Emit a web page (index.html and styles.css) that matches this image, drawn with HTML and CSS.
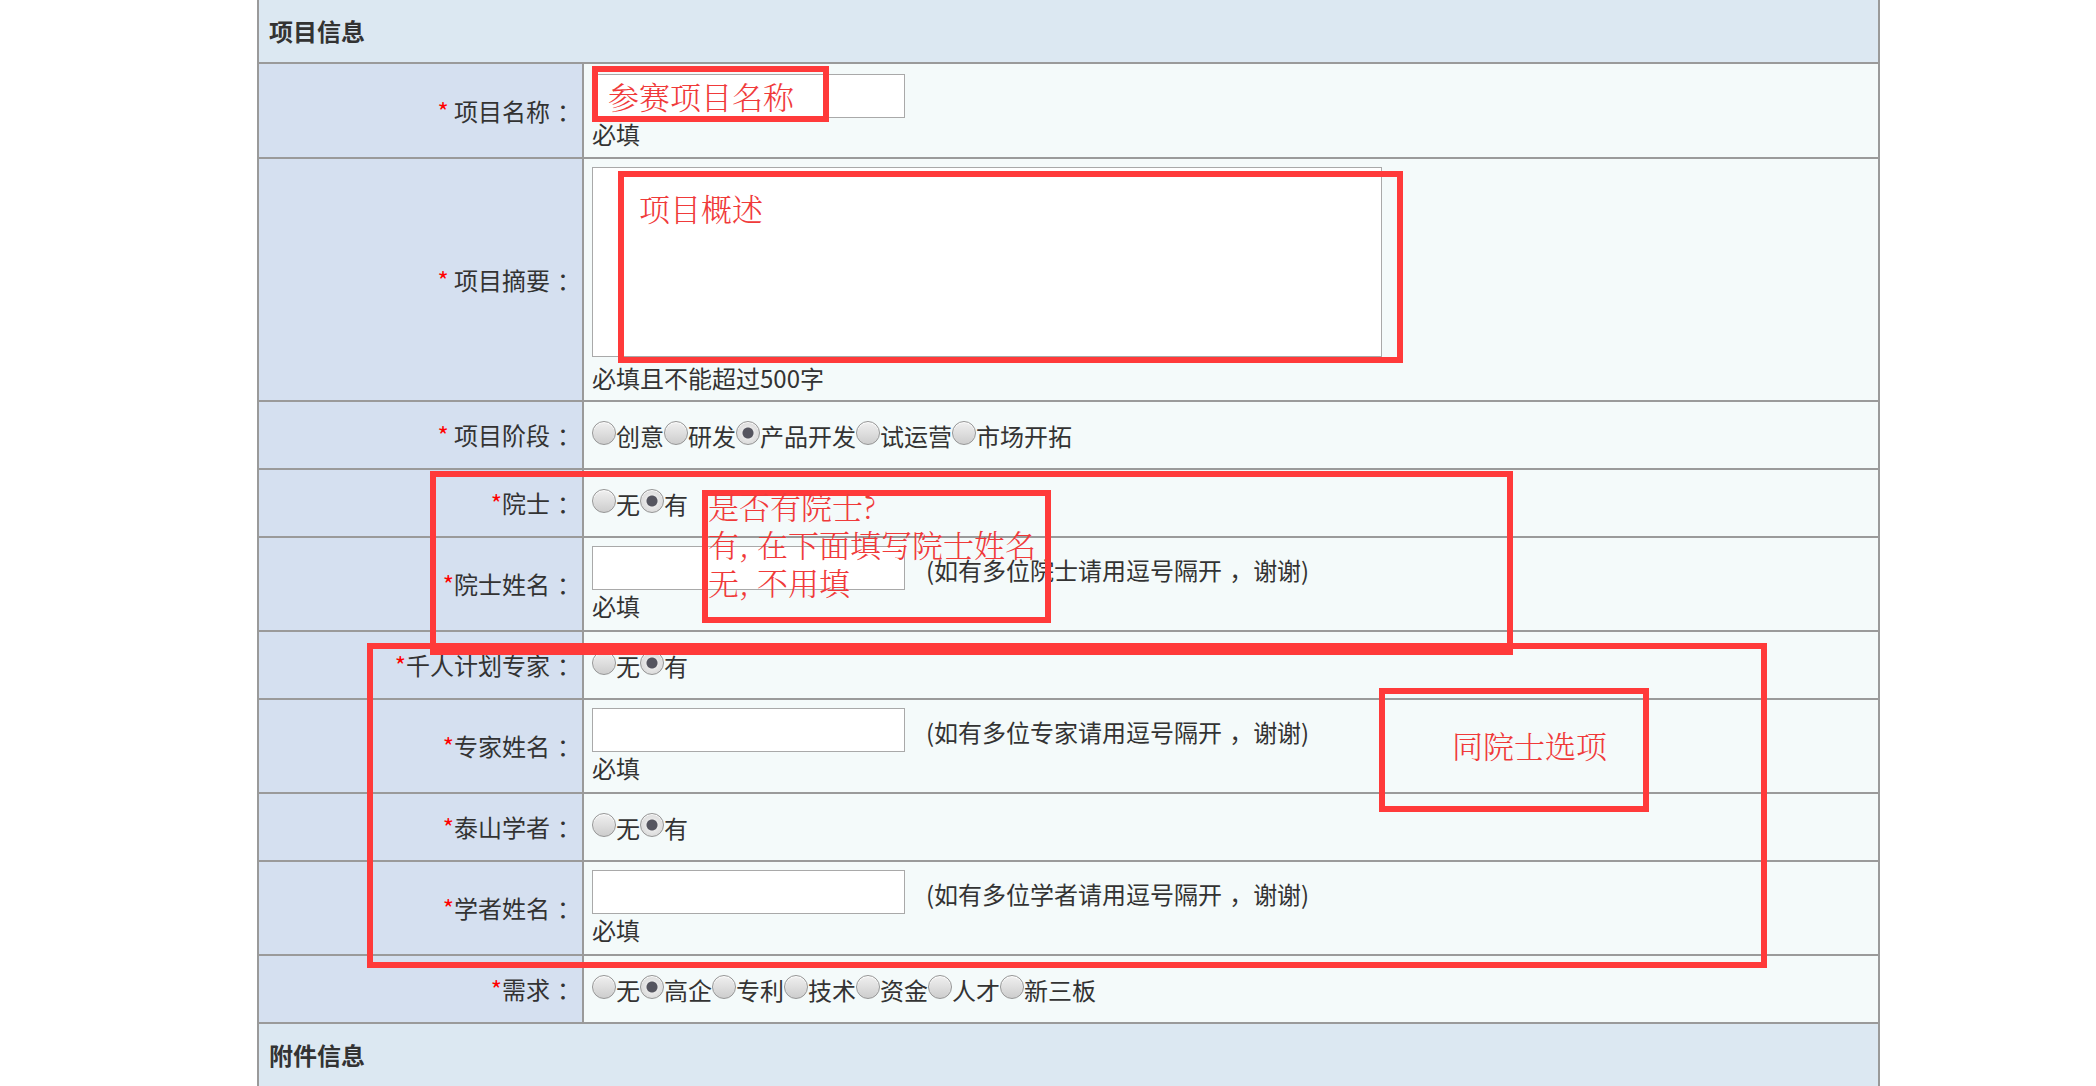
FILE: index.html
```html
<!doctype html>
<html lang="zh-CN">

    <head>
        <meta charset="utf-8">
        <title>项目信息</title>
        <link rel="stylesheet" href="styles.css">
    </head>

    <body>

        <div class="page">

            <table class="tblForm">
                <tr class="trHead">
                    <th colspan="2">项目信息</th>
                </tr>
                <tr class="trName">
                    <td class="tdLabel"><span class="req">*</span> 项目名称<span class="punc">：</span></td>
                    <td class="tdField tdTop">
                        <input type="text" class="txtInput">
                        <div class="note">必填</div>
                    </td>
                </tr>
                <tr class="trSummary">
                    <td class="tdLabel"><span class="req">*</span> 项目摘要<span class="punc">：</span></td>
                    <td class="tdField tdTop">
                        <textarea class="txtArea"></textarea>
                        <div class="note noteArea">必填且不能超过500字</div>
                    </td>
                </tr>
                <tr class="trRadio">
                    <td class="tdLabel"><span class="req">*</span> 项目阶段<span class="punc">：</span></td>
                    <td class="tdField">
                        <div class="opts">
                            <label class="opt"><input type="radio" name="stage" class="rdo">创意</label>
                            <label class="opt"><input type="radio" name="stage" class="rdo">研发</label>
                            <label class="opt"><input type="radio" name="stage" class="rdo" checked>产品开发</label>
                            <label class="opt"><input type="radio" name="stage" class="rdo">试运营</label>
                            <label class="opt"><input type="radio" name="stage" class="rdo">市场开拓</label>
                        </div>
                    </td>
                </tr>
                <tr class="trRadio">
                    <td class="tdLabel"><span class="req">*</span>院士<span class="punc">：</span></td>
                    <td class="tdField">
                        <div class="opts">
                            <label class="opt"><input type="radio" name="acad" class="rdo">无</label>
                            <label class="opt"><input type="radio" name="acad" class="rdo" checked>有</label>
                        </div>
                    </td>
                </tr>
                <tr class="trInput">
                    <td class="tdLabel"><span class="req">*</span>院士姓名<span class="punc">：</span></td>
                    <td class="tdField tdTop">
                        <div class="fieldLine">
                            <input type="text" class="txtInput">
                            <span class="hint">(如有多位院士请用逗号隔开<span class="punc">，</span>谢谢)</span>
                        </div>
                        <div class="note">必填</div>
                    </td>
                </tr>
                <tr class="trRadio">
                    <td class="tdLabel"><span class="req">*</span>千人计划专家<span class="punc">：</span></td>
                    <td class="tdField">
                        <div class="opts">
                            <label class="opt"><input type="radio" name="expert" class="rdo">无</label>
                            <label class="opt"><input type="radio" name="expert" class="rdo" checked>有</label>
                        </div>
                    </td>
                </tr>
                <tr class="trInput">
                    <td class="tdLabel"><span class="req">*</span>专家姓名<span class="punc">：</span></td>
                    <td class="tdField tdTop">
                        <div class="fieldLine">
                            <input type="text" class="txtInput">
                            <span class="hint">(如有多位专家请用逗号隔开<span class="punc">，</span>谢谢)</span>
                        </div>
                        <div class="note">必填</div>
                    </td>
                </tr>
                <tr class="trRadio">
                    <td class="tdLabel"><span class="req">*</span>泰山学者<span class="punc">：</span></td>
                    <td class="tdField">
                        <div class="opts">
                            <label class="opt"><input type="radio" name="scholar" class="rdo">无</label>
                            <label class="opt"><input type="radio" name="scholar" class="rdo" checked>有</label>
                        </div>
                    </td>
                </tr>
                <tr class="trInput">
                    <td class="tdLabel"><span class="req">*</span>学者姓名<span class="punc">：</span></td>
                    <td class="tdField tdTop">
                        <div class="fieldLine">
                            <input type="text" class="txtInput">
                            <span class="hint">(如有多位学者请用逗号隔开<span class="punc">，</span>谢谢)</span>
                        </div>
                        <div class="note">必填</div>
                    </td>
                </tr>
                <tr class="trRadio">
                    <td class="tdLabel"><span class="req">*</span>需求<span class="punc">：</span></td>
                    <td class="tdField">
                        <div class="opts">
                            <label class="opt"><input type="radio" name="need" class="rdo">无</label>
                            <label class="opt"><input type="radio" name="need" class="rdo" checked>高企</label>
                            <label class="opt"><input type="radio" name="need" class="rdo">专利</label>
                            <label class="opt"><input type="radio" name="need" class="rdo">技术</label>
                            <label class="opt"><input type="radio" name="need" class="rdo">资金</label>
                            <label class="opt"><input type="radio" name="need" class="rdo">人才</label>
                            <label class="opt"><input type="radio" name="need" class="rdo">新三板</label>
                        </div>
                    </td>
                </tr>
                <tr class="trHead">
                    <th colspan="2">附件信息</th>
                </tr>
            </table>

            <!-- red notes drawn over the form -->
            <div class="mark markName">参赛项目名称</div>
            <div class="mark markSummary">项目概述</div>
            <div class="mark markAcad"></div>
            <div class="mark markAcadNote">
                <div class="markText">是否有院士?<br>有, 在下面填写院士姓名<br>无, 不用填</div>
            </div>
            <div class="mark markExpert"></div>
            <div class="mark markSame">同院士选项</div>

        </div>

    </body>

</html>
```

FILE: styles.css
```css
* {
    box-sizing: border-box;
}

html {
    overflow: hidden;
}

body {
    margin: 0;
    background: #fff;
    color: #333;
    font: normal 24px/32px "Noto Sans CJK SC", sans-serif;
}

.page {
    position: relative;
    width: 2096px;
    height: 1086px;
}

.tblForm {
    margin-left: 257px;
    width: 1623px;
    border-collapse: separate;
    border-spacing: 0;
    border-left: 2px solid #9a9a9a;
    border-right: 2px solid #9a9a9a;
}

.tblForm th,
.tblForm td {
    border-bottom: 2px solid #9a9a9a;
}

.tblForm .trHead th {
    height: 64px;
    padding: 0 0 0 10px;
    background: #dce8f2;
    font-weight: bold;
    text-align: left;
    vertical-align: middle;
}

.tblForm .tdLabel {
    width: 325px;
    padding: 0 1px 0 0;
    background: #d5e0f0;
    border-right: 2px solid #9a9a9a;
    text-align: right;
    vertical-align: middle;
    white-space: nowrap;
}

/* full-width punctuation sits centred in the original font */
.punc {
    padding-left: 7px;
}

.req {
    color: #f00;
}

.tblForm .tdField {
    padding: 0 0 0 8px;
    background: #f4fafa;
    vertical-align: middle;
}

.tblForm .tdTop {
    vertical-align: top;
    padding-top: 8px;
}

.trName td {
    height: 95px;
}

.tblForm .trName .tdTop {
    padding-top: 10px;
}

.trSummary td {
    height: 243px;
}

.trRadio td {
    height: 68px;
}

.trInput td {
    height: 94px;
}

.txtInput {
    display: block;
    flex-shrink: 0;
    width: 313px;
    height: 44px;
    margin: 0;
    border: 1px solid #a9a9a9;
    background: #fff;
}

.txtArea {
    display: block;
    width: 790px;
    height: 190px;
    margin: 0;
    border: 1px solid #a9a9a9;
    background: #fff;
    resize: none;
}

.note {
    line-height: 32px;
}

.noteArea {
    margin-top: 5px;
}

.fieldLine {
    display: flex;
    align-items: center;
}

.hint {
    margin-left: 21px;
    padding-top: 4px;
}

.opts {
    display: flex;
    align-items: center;
    padding-top: 2px;
}

.opt {
    display: inline-flex;
    align-items: center;
}

.rdo {
    -webkit-appearance: none;
    appearance: none;
    flex: 0 0 24px;
    width: 24px;
    height: 24px;
    margin: 0 0 6px 0;
    border: 1px solid #969696;
    border-radius: 50%;
    background: linear-gradient(#f0f0f0, #cdcdcd);
    box-shadow: inset 0 1px 1px #fff;
}

.rdo:checked {
    background: radial-gradient(circle, #55555f 0, #55555f 5px, #e8e8e8 6px, #d0d0d0 100%);
}

/* annotation boxes */

.mark {
    position: absolute;
    border: 6px solid #ff3a3a;
    color: #f03a3a;
    font: 300 31px/38px "Noto Serif CJK SC", "Noto Sans CJK SC", serif;
    white-space: nowrap;
}

.markName {
    left: 592px;
    top: 66px;
    width: 237px;
    height: 56px;
    padding: 5px 0 0 10px;
}

.markSummary {
    left: 618px;
    top: 171px;
    width: 785px;
    height: 192px;
    padding: 12px 0 0 15px;
}

.markAcad {
    left: 430px;
    top: 471px;
    width: 1083px;
    height: 184px;
}

.markAcadNote {
    left: 702px;
    top: 490px;
    width: 349px;
    height: 133px;
}

.markText {
    margin-top: -9px;
}

.markExpert {
    left: 367px;
    top: 643px;
    width: 1400px;
    height: 325px;
}

.markSame {
    left: 1379px;
    top: 688px;
    width: 270px;
    height: 124px;
    padding: 32px 0 0 67px;
}
```
